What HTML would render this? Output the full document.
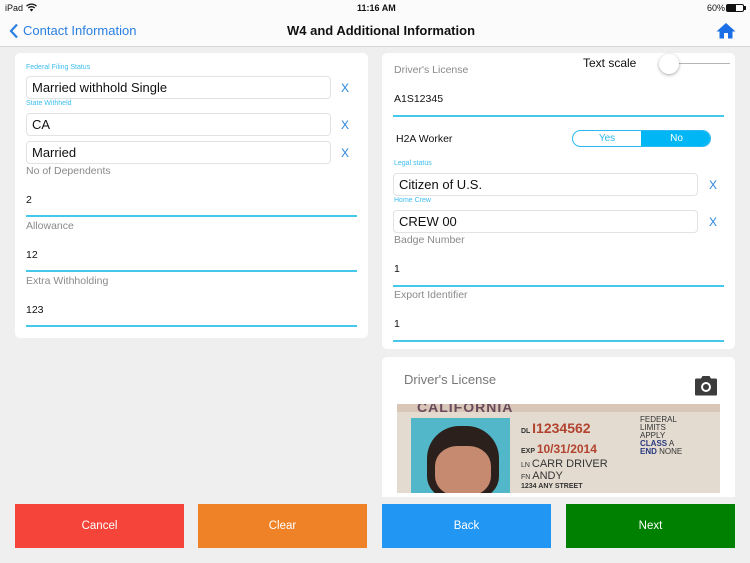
<!DOCTYPE html>
<html><head><meta charset="utf-8"><style>
*{margin:0;padding:0;box-sizing:border-box}
body{width:750px;height:563px;background:#efefef;font-family:"Liberation Sans",sans-serif;position:relative;overflow:hidden}
.a{position:absolute;white-space:nowrap}
.card{position:absolute;background:#fff;border-radius:5px}
.lbl{position:absolute;font-size:7px;color:#3cbdee}
.glbl{position:absolute;font-size:10.5px;color:#8a8a8a}
.inp{position:absolute;border:1px solid #e2e2e2;border-radius:4px;background:#fff;font-size:13px;color:#111;padding:3px 0 0 5px;height:23px}
.x{position:absolute;font-size:12px;color:#2a86e0}
.val{position:absolute;font-size:10.5px;color:#111}
.ln{position:absolute;height:2px;background:#45c8ea}
.btn{position:absolute;top:504px;height:44px;width:169px;color:#fff;font-size:11.5px;text-align:center;line-height:44px}
</style></head><body>
<div class="a" style="left:0;top:0;width:750px;height:47px;background:#fbfbfb;border-bottom:1px solid #d6d6d6"></div>
<div class="a" style="left:5px;top:3px;font-size:9px;color:#111">iPad</div>
<svg class="a" style="left:26px;top:3px" width="11" height="9" viewBox="0 0 11 9"><path d="M0.5 3.2 A7 7 0 0 1 10.5 3.2 M2.3 5 A4.5 4.5 0 0 1 8.7 5" stroke="#111" stroke-width="1.3" fill="none"/><path d="M5.5 8.5 L3.8 6.6 A2.4 2.4 0 0 1 7.2 6.6Z" fill="#111"/></svg>
<div class="a" style="left:357px;top:3px;font-size:9px;color:#111;font-weight:bold">11:16 AM</div>
<div class="a" style="left:707px;top:3px;font-size:9px;color:#111">60%</div>
<div class="a" style="left:726px;top:4px;width:18px;height:8px;border:1px solid #111;border-radius:2px"><div style="width:9px;height:6px;background:#111"></div></div>
<div class="a" style="left:744px;top:6px;width:2px;height:4px;background:#111"></div>
<svg class="a" style="left:9px;top:23px" width="10" height="16" viewBox="0 0 10 16"><path d="M8 1.5 L2 8 L8 14.5" stroke="#2a7fe0" stroke-width="2.2" fill="none"/></svg>
<div class="a" style="left:23px;top:23px;font-size:13px;color:#2a7fe0">Contact Information</div>
<div class="a" style="left:287px;top:23px;font-size:13px;color:#111;font-weight:bold">W4 and Additional Information</div>
<svg class="a" style="left:716px;top:22px" width="20" height="17" viewBox="0 0 20 17"><path d="M10 1 L19.5 9.5 L16.5 9.5 L16.5 16.5 L12 16.5 L12 11 L8 11 L8 16.5 L3.5 16.5 L3.5 9.5 L0.5 9.5Z" fill="#1a6fe6"/></svg>

<div class="card" style="left:15px;top:53px;width:353px;height:285px"></div>
<div class="lbl" style="left:26px;top:64px">Federal Filing Status</div>
<div class="inp" style="left:26px;top:76px;width:305px">Married withhold Single</div>
<div class="x" style="left:341px;top:81px">X</div>
<div class="lbl" style="left:26px;top:100px">State Withheld</div>
<div class="inp" style="left:26px;top:113px;width:305px">CA</div>
<div class="x" style="left:341px;top:118px">X</div>
<div class="inp" style="left:26px;top:141px;width:305px">Married</div>
<div class="x" style="left:341px;top:146px">X</div>
<div class="glbl" style="left:26px;top:165px">No of Dependents</div>
<div class="val" style="left:26px;top:194px">2</div>
<div class="ln" style="left:26px;top:215px;width:331px"></div>
<div class="glbl" style="left:26px;top:220px">Allowance</div>
<div class="val" style="left:26px;top:249px">12</div>
<div class="ln" style="left:26px;top:270px;width:331px"></div>
<div class="glbl" style="left:26px;top:275px">Extra Withholding</div>
<div class="val" style="left:26px;top:304px">123</div>
<div class="ln" style="left:26px;top:325px;width:331px"></div>

<div class="card" style="left:382px;top:53px;width:353px;height:296px"></div>
<div class="glbl" style="left:394px;top:64px">Driver's License</div>
<div class="a" style="left:583px;top:56px;font-size:12px;color:#111">Text scale</div>
<div class="a" style="left:670px;top:63px;width:60px;height:1px;background:#b5b5b5"></div>
<div class="a" style="left:659px;top:54px;width:20px;height:20px;border-radius:50%;background:#fff;box-shadow:0 1px 3px rgba(0,0,0,.35)"></div>
<div class="val" style="left:394px;top:93px">A1S12345</div>
<div class="ln" style="left:393px;top:115px;width:331px"></div>
<div class="val" style="left:396px;top:133px">H2A Worker</div>
<div class="a" style="left:572px;top:130px;width:139px;height:17px;border:1px solid #2bb8f0;border-radius:9px;overflow:hidden;font-size:10px">
<div class="a" style="left:0;top:0;width:68px;height:15px;line-height:15px;text-align:center;color:#2bb8f0">Yes</div>
<div class="a" style="left:68px;top:0;width:71px;height:15px;line-height:15px;text-align:center;color:#fff;background:#00b6f5">No</div></div>
<div class="lbl" style="left:394px;top:160px">Legal status</div>
<div class="inp" style="left:393px;top:173px;width:305px">Citizen of U.S.</div>
<div class="x" style="left:709px;top:178px">X</div>
<div class="lbl" style="left:394px;top:197px">Home Crew</div>
<div class="inp" style="left:393px;top:210px;width:305px">CREW 00</div>
<div class="x" style="left:709px;top:215px">X</div>
<div class="glbl" style="left:394px;top:234px">Badge Number</div>
<div class="val" style="left:394px;top:263px">1</div>
<div class="ln" style="left:393px;top:285px;width:331px"></div>
<div class="glbl" style="left:394px;top:289px">Export Identifier</div>
<div class="val" style="left:394px;top:318px">1</div>
<div class="ln" style="left:393px;top:340px;width:331px"></div>

<div class="card" style="left:382px;top:357px;width:353px;height:140px;border-radius:5px 5px 0 0"></div>
<div class="a" style="left:404px;top:372px;font-size:13px;color:#777">Driver's License</div>
<svg class="a" style="left:694px;top:375px" width="24" height="21" viewBox="0 0 24 21"><path d="M1 5 Q1 3.5 2.5 3.5 L7 3.5 L8.5 1 L15.5 1 L17 3.5 L21.5 3.5 Q23 3.5 23 5 L23 19.5 Q23 20.5 22 20.5 L2 20.5 Q1 20.5 1 19.5Z" fill="#3c3c3c"/><circle cx="12" cy="12" r="5" fill="#fff"/><circle cx="12" cy="12" r="3" fill="#3c3c3c"/></svg>
<div class="a" style="left:397px;top:404px;width:323px;height:89px;background:#e3dbd0;overflow:hidden">
<div class="a" style="left:0;top:0;width:323px;height:8px;background:#d8c6b8"></div>
<div class="a" style="left:20px;top:-5px;font-size:14px;font-weight:bold;color:#6a4a5a;letter-spacing:1px">CALIFORNIA</div>
<div class="a" style="left:14px;top:14px;width:99px;height:80px;background:#52b7c8"></div>
<div class="a" style="left:30px;top:22px;width:72px;height:72px;border-radius:45% 45% 30% 30%;background:#2b201b"></div>
<div class="a" style="left:38px;top:42px;width:56px;height:50px;border-radius:40%;background:#c58a70"></div>
<div class="a" style="left:124px;top:16px;font-size:14px;font-weight:bold;color:#b2432e"><span style="font-size:7px;color:#333">DL </span>I1234562</div>
<div class="a" style="left:124px;top:38px;font-size:12px;font-weight:bold;color:#b2432e"><span style="font-size:7px;color:#333">EXP </span>10/31/2014</div>
<div class="a" style="left:124px;top:54px;font-size:11px;color:#333"><span style="font-size:7px">LN </span>CARR DRIVER</div>
<div class="a" style="left:124px;top:66px;font-size:11px;color:#333"><span style="font-size:7px">FN </span>ANDY</div>
<div class="a" style="left:124px;top:79px;font-size:7px;color:#333;font-weight:bold">1234 ANY STREET</div>
<div class="a" style="left:243px;top:12px;font-size:8px;line-height:8px;color:#333">FEDERAL<br>LIMITS<br>APPLY<br><b style="color:#2a3a80">CLASS</b> A<br><b style="color:#2a3a80">END</b> NONE</div>
</div>

<div class="btn" style="left:15px;background:#f5443a">Cancel</div>
<div class="btn" style="left:198px;background:#ef8126">Clear</div>
<div class="btn" style="left:382px;background:#2196f3">Back</div>
<div class="btn" style="left:566px;background:#008000">Next</div>
</body></html>
